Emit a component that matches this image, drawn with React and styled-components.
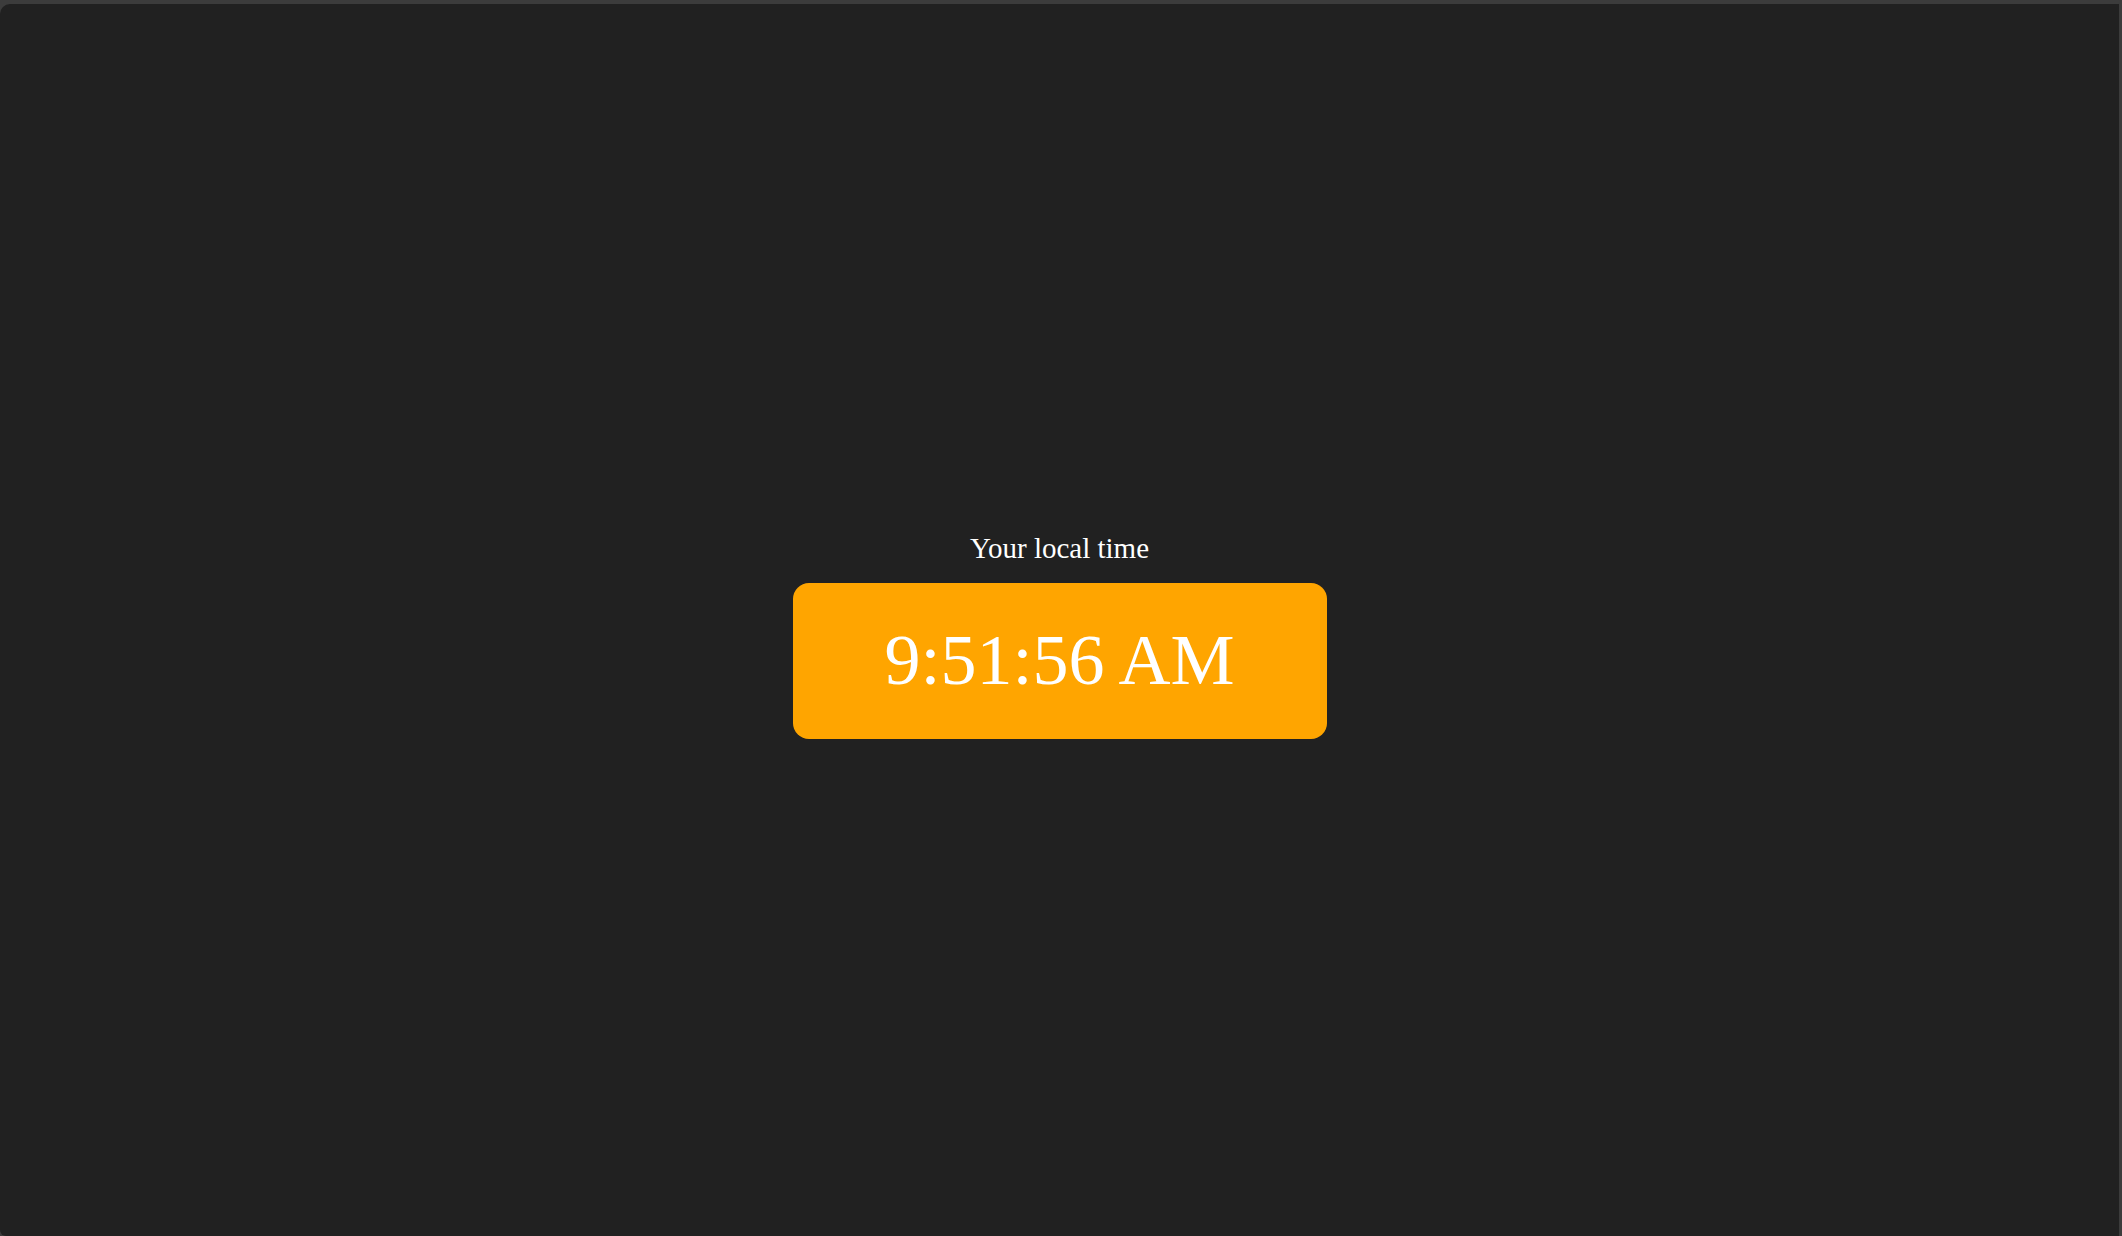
import React from "react";
import styled, { createGlobalStyle } from "styled-components";

const Global = createGlobalStyle`
  html, body { margin: 0; padding: 0; height: 100%; }
  body { background: #3c3c3c; overflow: hidden; }
  #root { height: 100%; }
`;

const Frame = styled.div`
  box-sizing: border-box;
  height: 1236px;
  width: 2122px;
  padding: 4px 3px 0 0;
  background: #3c3c3c;
  display: flex;
`;

const Panel = styled.main`
  flex: 1;
  background: #212121;
  border-top-left-radius: 10px;
  border-bottom-left-radius: 6px;
  display: flex;
  align-items: center;
  justify-content: center;
  padding-top: 30px;
  box-sizing: border-box;
`;

const Group = styled.section`
  display: flex;
  flex-direction: column;
  align-items: center;
  gap: 18px;
  font-family: "Liberation Serif", "Times New Roman", serif;
  color: #ffffff;
`;

const Label = styled.div`
  font-size: 29px;
  line-height: normal;
`;

const Clock = styled.div`
  box-sizing: border-box;
  width: 534px;
  height: 156px;
  background: #ffa500;
  border-radius: 16px;
  display: flex;
  align-items: center;
  justify-content: center;
  font-size: 72px;
  line-height: normal;
`;

export default function App() {
  return (
    <>
      <Global />
      <Frame>
        <Panel>
          <Group>
            <Label>Your local time</Label>
            <Clock>9:51:56 AM</Clock>
          </Group>
        </Panel>
      </Frame>
    </>
  );
}
